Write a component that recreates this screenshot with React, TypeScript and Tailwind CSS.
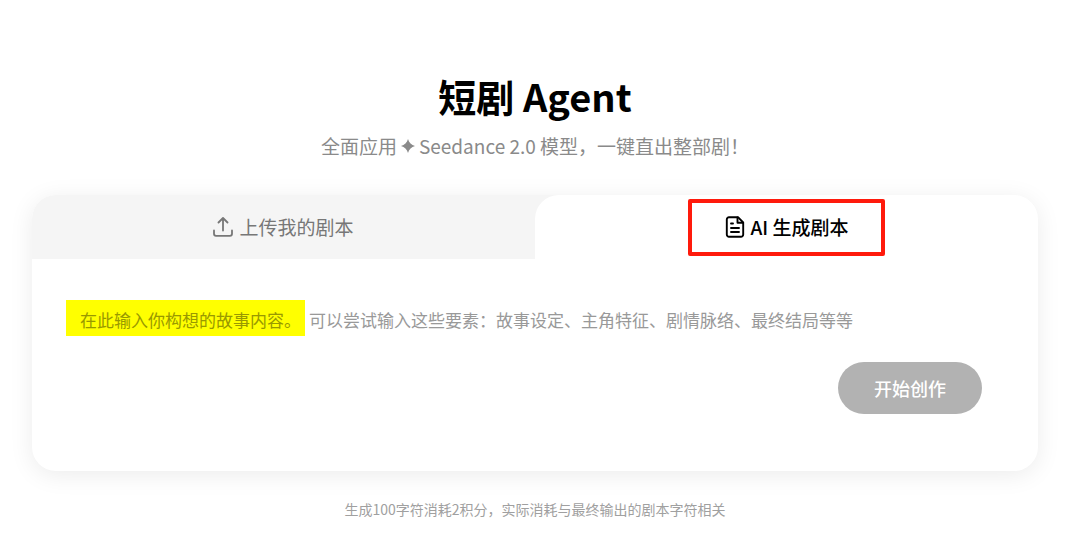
import { useState } from "react";

function UploadIcon() {
  return (
    <svg aria-hidden="true" className="size-5 shrink-0" viewBox="0 0 20 20" fill="none" stroke="currentColor" strokeWidth="1.8" strokeLinecap="round" strokeLinejoin="round">
      <path d="M10 13.500V1.200M5.500 5.500 10 1l4.500 4.500" />
      <path d="M1 13.500v3.300c0 1.200.8 2 2 2h14c1.200 0 2-.8 2-2v-3.300" />
    </svg>
  );
}

function ScriptIcon() {
  return (
    <svg aria-hidden="true" className="h-[22px] w-5 shrink-0" viewBox="0 0 20 22" fill="none" stroke="currentColor" strokeWidth="1.9" strokeLinecap="round" strokeLinejoin="round">
      <path d="M13 1.200H4A2.200 2.200 0 0 0 1.800 3.400v15.200a2.200 2.200 0 0 0 2.200 2.200h12a2.200 2.200 0 0 0 2.200-2.200V6.500z" />
      <path d="M12.500 1.500v5.300h5.400" />
      <path d="M6 7.500h2M6 12h8M6 16h8" />
    </svg>
  );
}

function Sparkle() {
  return (
    <svg aria-hidden="true" className="size-3.5 shrink-0" viewBox="0 0 12 12" fill="currentColor">
      <path d="M6 0C6.800 3 9 5.200 12 6 9 6.800 6.800 9 6 12 5.200 9 3 6.800 0 6 3 5.200 5.200 3 6 0Z" />
    </svg>
  );
}

export default function App() {
  const [story, setStory] = useState("");

  return (
    <main className="bg-white pt-[68px] pr-[42px] pb-8 pl-8 font-['Noto_Sans_CJK_SC',sans-serif] text-black">
      <header className="flex flex-col items-center">
        <h1 className="text-[38px] leading-14 font-bold">短剧 Agent</h1>
        <p className="mt-1.5 flex items-center gap-1 text-[19px] leading-8 text-[#8a8a8a]">
          <span>全面应用</span>
          <Sparkle />
          <span>Seedance 2.0 模型，一键直出整部剧！</span>
        </p>
      </header>

      <section className="mt-[33px] overflow-hidden rounded-3xl bg-white shadow-[0_4px_24px_rgba(0,0,0,0.08)]">
        <div role="tablist" className="grid h-16 grid-cols-2 bg-[#f5f5f5] text-[19px]">
          <button type="button" role="tab" aria-selected="false" className="flex items-center justify-center gap-1.5 text-[#777777]">
            <UploadIcon />
            上传我的剧本
          </button>
          <button type="button" role="tab" aria-selected="true" className="flex items-center justify-center rounded-tl-3xl bg-white font-medium">
            <span className="flex h-[57px] w-[197px] items-center justify-center gap-1.5 rounded-xs border-4 border-[#ff1a0c]">
              <ScriptIcon />
              AI 生成剧本
            </span>
          </button>
        </div>

        <div className="flex flex-col pt-[41px] pr-14 pb-14 pl-[34px]">
          <div className="grid h-[62px]">
            {story === "" && (
              <label htmlFor="story" className="pointer-events-none col-start-1 row-start-1 flex items-start text-[17px] leading-8 text-[#999999]">
                <mark className="bg-[#ffff00] pt-1 pr-1 pl-3.5 text-[#999900]">在此输入你构想的故事内容。</mark>
                <span className="pt-1 pl-1">可以尝试输入这些要素：故事设定、主角特征、剧情脉络、最终结局等等</span>
              </label>
            )}
            <textarea
              id="story"
              value={story}
              onChange={(event) => setStory(event.target.value)}
              className="col-start-1 row-start-1 resize-none bg-transparent px-3.5 pt-1 text-[17px] leading-8 outline-none"
            />
          </div>
          <button type="button" className="h-[52px] self-end rounded-full bg-[#b2b2b2] px-9 text-lg font-medium text-white">
            开始创作
          </button>
          <div className="h-px" />
        </div>
      </section>

      <p className="mt-[26px] text-center text-sm leading-6 text-[#a0a0a0]">生成100字符消耗2积分，实际消耗与最终输出的剧本字符相关</p>
    </main>
  );
}
